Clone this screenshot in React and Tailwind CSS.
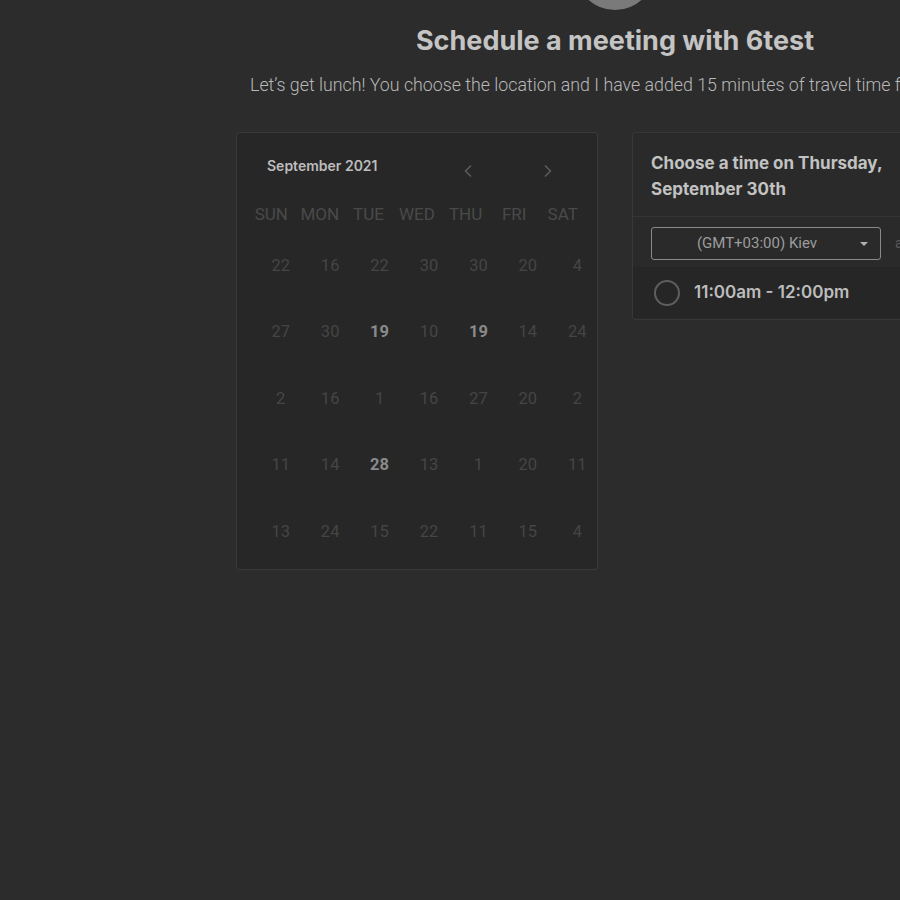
import { ChevronLeft, ChevronRight } from 'lucide-react';

const DAYS = ['SUN', 'MON', 'TUE', 'WED', 'THU', 'FRI', 'SAT'];

const WEEKS = [
  [22, 16, 22, 30, 30, 20, 4],
  [27, 30, '19*', 10, '19*', 14, 24],
  [2, 16, 1, 16, 27, 20, 2],
  [11, 14, '28*', 13, 1, 20, 11],
  [13, 24, 15, 22, 11, 15, 4],
];

const inter = { fontFamily: 'Inter, "Noto Sans", sans-serif' };
const roboto = { fontFamily: 'Roboto, "Liberation Sans", sans-serif' };

function DayCell({ value }) {
  const active = String(value).endsWith('*');
  const label = String(value).replace('*', '');
  return (
    <div className="flex h-[66.5px] items-center justify-center">
      <span className={active ? 'text-[16.5px] font-bold text-[#8a8a8a]' : 'text-[16.5px] text-[#454545]'}>
        {label}
      </span>
    </div>
  );
}

export default function App() {
  return (
    <div className="h-[900px] w-full overflow-hidden bg-[#2c2c2c]">
      <div className="w-[1230px]">
        <div className="flex justify-center">
          <div className="-mt-[70px] h-[80px] w-[80px] rounded-full bg-[#7a7a7a]" />
        </div>

        <h1 className="mt-[14px] text-center text-[27px] font-bold leading-[34px] text-[#c4c4c4]" style={inter}>
          Schedule a meeting with 6test
        </h1>
        <p className="mt-[16px] whitespace-nowrap pl-[250px] text-[17.8px] font-light leading-[22px] text-[#b8b8b8]" style={roboto}>
          Let’s get lunch! You choose the location and I have added 15 minutes of travel time for you.
        </p>

        <div className="mt-[36px] flex justify-center gap-[34px]">
          <div className="h-[438px] w-[362px] rounded-[3px] border border-[#3a3a3a] bg-[#272727] px-[10px]">
            <div className="flex h-[68px] items-center pl-[20px]">
              <span className="-mt-[4px] text-[14px] font-semibold text-[#bdbdbd]" style={inter}>
                September 2021
              </span>
              <div className="ml-auto flex items-center gap-[60px] pr-[29px] pt-[8px]">
                <ChevronLeft className="h-[20px] w-[20px] text-[#5c5c5c]" strokeWidth={2} />
                <ChevronRight className="h-[20px] w-[20px] text-[#5c5c5c]" strokeWidth={2} />
              </div>
            </div>
            <div className="grid grid-cols-7" style={roboto}>
              {DAYS.map((d) => (
                <div key={d} className="flex h-[28px] items-center justify-center text-[17px] text-[#4a4a4a]">
                  {d}
                </div>
              ))}
            </div>
            <div className="ml-[9px] mt-[4px] grid w-[346px] grid-cols-7" style={roboto}>
              {WEEKS.flat().map((v, i) => (
                <DayCell key={i} value={v} />
              ))}
            </div>
          </div>

          <div className="h-[188px] w-[362px] self-start overflow-hidden rounded-[3px] border border-[#383838] bg-[#2a2a2a]" style={inter}>
            <div className="border-b border-[#353535] px-[18px] pb-[14px] pt-[17px]">
              <p className="text-[17px] font-bold leading-[26px] text-[#c2c2c2]">
                Choose a time on Thursday,
                <br />
                September 30th
              </p>
            </div>
            <div className="flex items-center gap-[14px] px-[18px] pb-[7px] pt-[10px]">
              <div className="relative flex h-[33px] w-[230px] items-center justify-center rounded-[3px] border border-[#8a8a8a] pr-[18px] text-[15px] text-[#9c9c9c]" style={roboto}>
                (GMT+03:00) Kiev
                <span className="absolute right-[12px] top-[14px] h-0 w-0 border-x-[4px] border-t-[4px] border-x-transparent border-t-[#b0b0b0]" />
              </div>
              <span className="text-[14px] text-[#5a5a5a]" style={roboto}>am/pm</span>
            </div>
            <div className="flex h-[51px] items-center gap-[14px] bg-[#262626] px-[21px]">
              <span className="h-[26px] w-[26px] rounded-full border-2 border-[#5e5e5e]" />
              <span className="text-[17px] font-semibold text-[#bdbdbd]">11:00am - 12:00pm</span>
            </div>
          </div>
        </div>
      </div>
    </div>
  );
}
